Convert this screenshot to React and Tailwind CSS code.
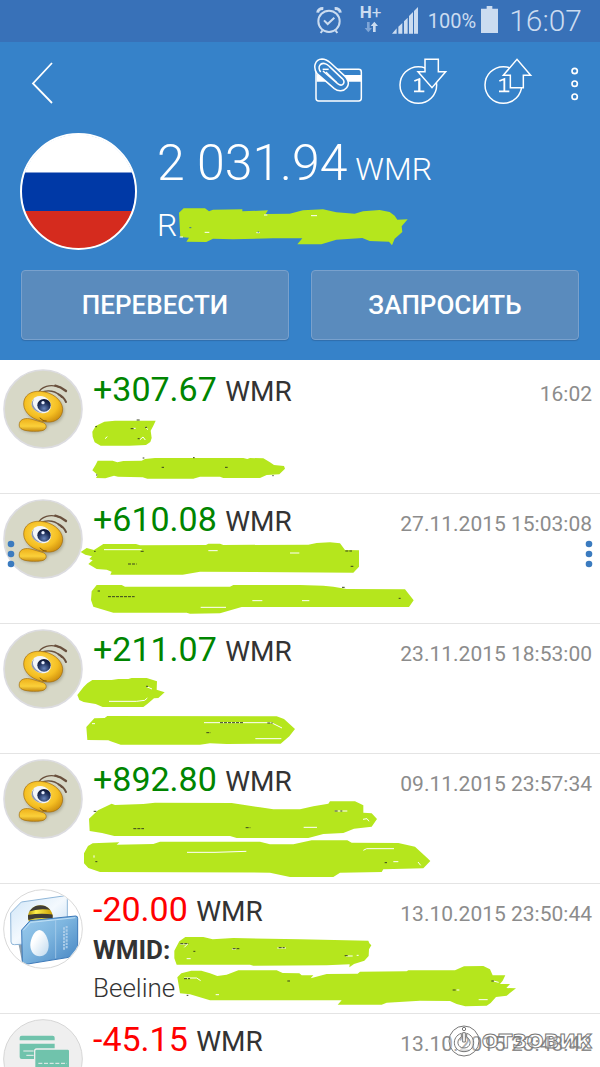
import React from "react";

const LIME = "#b5e61d";

function StatusBar() {
  return (
    <div className="flex h-[42px] items-center justify-end bg-[#3871b8] pr-[18px] text-[#cbdcf0]">
      <svg className="h-[42px] w-[26px]" viewBox="51 0 78 126" fill="none" stroke="currentColor" aria-label="Будильник">
        <circle cx="90" cy="64" r="32" strokeWidth="6" />
        <path d="M75 61l11 11 20-19" strokeWidth="6" />
        <path d="M56 38c1-8 8-13 17-12M124 38c-1-8-8-13-17-12" strokeWidth="9" />
        <path d="M70 92l-5 7M110 92l5 7" strokeWidth="6" />
      </svg>
      <div className="ml-[18px] flex h-[42px] w-[22px] flex-col items-start pt-[3px]">
        <span className="text-[17px] font-bold leading-[18px]">H<span className="font-normal">+</span></span>
        <svg className="ml-1 h-[12px] w-[16px]" viewBox="0 0 48 36" aria-hidden="true">
          <path d="M9 3h8v18h7L13 34 2 21h7z" fill="#7ea5d6" />
          <path d="M27 33h8V15h7L31 2 20 15h7z" fill="currentColor" />
        </svg>
      </div>
      <svg className="ml-[9px] h-[42px] w-[28px]" viewBox="274 0 84 126" fill="currentColor" aria-label="Сигнал">
        <path d="M277 101l14-16v16zM296 80l12-11v32h-12zM313 64l11-11v48h-11zM328 48l12-12v65h-12zM343 33l12-12v80h-12z" />
      </svg>
      <span className="ml-[9px] text-[20px] leading-[42px]">100%</span>
      <svg className="ml-[4px] h-[42px] w-[19px]" viewBox="540 0 57 126" fill="currentColor" aria-label="Батарея">
        <path d="M560 18h17v8h17v73h-51V26h17z" />
      </svg>
      <span className="ml-[10px] text-[30px] font-light leading-[42px]">16:07</span>
    </div>
  );
}

function Toolbar() {
  return (
    <div className="flex h-[84px] items-center justify-between pl-[24px] pr-[17px]">
      <button aria-label="Назад" className="h-[56px] w-[36px]">
        <svg viewBox="0 0 36 56" fill="none" stroke="white" strokeWidth="1.8">
          <path d="M28 7L9 27.500l19 19.500" />
        </svg>
      </button>
      <div className="flex gap-[34px]">
        <button aria-label="Прикрепить карту" className="h-[56px] w-[52px]">
          <svg viewBox="39 168 156 168" fill="none" stroke="white" strokeWidth="4.500" strokeLinejoin="round">
            <rect x="48" y="208" width="136" height="95" rx="8" />
            <path d="M50 225h134v20H50z" fill="white" stroke="none" />
            <path d="M51 221C38 201 45 178 66 177c11 0 18 5 26 12l41 38c12 12 16 25 7 36-9 11-25 12-37 3z" fill="#3682c9" />
            <path d="M62 216C51 200 61 187 76 191c5 1 8 4 12 8l38 36c13 13 1 27-13 16L69 213" />
            <path d="M68 208h18" />
            <path d="M78 216l32 31" strokeWidth="3.500" />
          </svg>
        </button>
        <button aria-label="Получить" className="h-[56px] w-[50px]">
          <svg viewBox="297 168 150 168" fill="none" stroke="white" strokeWidth="4.500">
            <circle cx="355" cy="255" r="55" />
            <path d="M343 243l15-6v36M342 274h31" strokeWidth="5.500" />
            <path d="M375 178h40v37h22l-41 48-42-48h21z" fill="#3682c9" />
            <path d="M358 237v36" strokeWidth="5.500" />
          </svg>
        </button>
        <button aria-label="Отправить" className="h-[56px] w-[50px]">
          <svg viewBox="549 168 150 168" fill="none" stroke="white" strokeWidth="4.500">
            <circle cx="610" cy="255" r="55" />
            <path d="M598 243l15-6v36M597 274h31" strokeWidth="5.500" />
            <path d="M631 263v-37h-21l41-48 41 48h-22v37z" fill="#3682c9" />
          </svg>
        </button>
        <button aria-label="Меню" className="h-[56px] w-[16px]">
          <svg viewBox="801 168 48 168" fill="none" stroke="white" strokeWidth="5">
            <circle cx="824" cy="213" r="8" />
            <circle cx="824" cy="251" r="8" />
            <circle cx="824" cy="290" r="8" />
          </svg>
        </button>
      </div>
    </div>
  );
}

function Balance() {
  return (
    <div className="flex pl-[20px] pt-[7px] text-white">
      <svg className="h-[117px] w-[117px] shrink-0" viewBox="0 0 117 117" aria-label="Россия">
        <defs>
          <clipPath id="flag"><circle cx="58.500" cy="58.500" r="57" /></clipPath>
        </defs>
        <g clipPath="url(#flag)">
          <rect width="117" height="40" fill="#fff" />
          <rect y="39.500" width="117" height="39" fill="#0039a6" />
          <rect y="78" width="117" height="39" fill="#d52b1e" />
        </g>
        <circle cx="58.500" cy="58.500" r="57.500" fill="none" stroke="#fff" strokeWidth="2" />
      </svg>
      <div className="relative ml-[20px] font-light">
        <div className="text-[50px] leading-[60px]">
          2 031.94<span className="text-[32px] leading-none"> WMR</span>
        </div>
        <div className="pt-[12px] text-[32px] leading-[40px]">R</div>
        <svg className="absolute left-[21px] top-[74px] h-[39px] w-[232px]" viewBox="85 230 696 117" aria-hidden="true">
          <path d="M88 247L102 234 166 234 178 243 190 238 278 237 278 243 355 240 348 251 420 250 460 240 520 237 560 246 615 250 640 243 690 239 720 245 735 256 743 268 774 267 756 288 758 305 735 325 727 345 718 334 660 332 638 323 560 328 515 342 443 342 458 324 370 324 250 327 190 325 170 335 110 334 118 322 92 320z" fill={LIME} />
          <path d="M90 320h10M343 254h10M484 256h18M320 307h10M165 306h14" stroke="#fff" strokeWidth="3" />
          <path d="M119 292h6M324 305h4" stroke="#3b70a5" strokeWidth="3" />
        </svg>
      </div>
    </div>
  );
}

function Actions() {
  const cls =
    "h-[70px] flex-1 rounded-[4px] border border-[#79a1cd] bg-[#5a8bbd] text-[26px] font-medium text-white shadow-[0_1px_1px_rgba(40,80,130,0.4)]";
  return (
    <div className="flex gap-[22px] px-[21px] pb-[20px] pt-[20px]">
      <button className={cls}>ПЕРЕВЕСТИ</button>
      <button className={cls}>ЗАПРОСИТЬ</button>
    </div>
  );
}

function BeeAvatar() {
  return (
    <svg className="h-[80px] w-[80px]" viewBox="9 12 240 240" aria-hidden="true">
      <defs>
        <radialGradient id="beeBody" cx="0.45" cy="0.4" r="0.65">
          <stop offset="0" stopColor="#ffe05c" />
          <stop offset="0.65" stopColor="#f5bf22" />
          <stop offset="1" stopColor="#cf900f" />
        </radialGradient>
        <linearGradient id="beeTail" x1="0" y1="0" x2="0" y2="1">
          <stop offset="0" stopColor="#eeb01a" />
          <stop offset="0.6" stopColor="#fad03a" />
          <stop offset="1" stopColor="#c88b10" />
        </linearGradient>
        <radialGradient id="beeEye" cx="0.5" cy="0.75" r="0.7">
          <stop offset="0" stopColor="#6884ba" />
          <stop offset="0.6" stopColor="#22345f" />
          <stop offset="1" stopColor="#101936" />
        </radialGradient>
        <filter id="beeShadow" x="-20%" y="-20%" width="150%" height="150%">
          <feGaussianBlur stdDeviation="4" />
        </filter>
      </defs>
      <circle cx="129" cy="132" r="117" fill="#d7d8c7" stroke="#dcdce0" strokeWidth="5" />
      <g fill="#8d8c74" opacity="0.6" filter="url(#beeShadow)">
        <ellipse cx="134" cy="132" rx="59" ry="46" transform="rotate(18 134 132)" />
        <ellipse cx="101" cy="185" rx="42" ry="18" />
      </g>
      <g fill="none" stroke="#69503d" strokeLinecap="round">
        <path d="M113 88C122 64 151 55 183 68" strokeWidth="4" />
        <path d="M166 62q16 3 32 16" strokeWidth="7" />
        <path d="M121 83C143 73 169 77 185 97" strokeWidth="4" />
        <path d="M176 88q15 7 22 23" strokeWidth="6" />
      </g>
      <path d="M58 176c2-14 20-19 38-13l34 10c13 6 11 21-4 24-19 4-52 2-63-6-5-4-6-9-5-15z" fill="url(#beeTail)" stroke="#a06d10" strokeWidth="2" />
      <path d="M71 117c0-26 22-40 50-38 36 2 65 26 67 52 1 26-22 43-48 40-38-3-69-26-69-54z" fill="url(#beeBody)" stroke="#9e6a11" strokeWidth="2" />
      <ellipse cx="124" cy="119" rx="30" ry="25" fill="#f4f6f9" transform="rotate(25 124 119)" />
      <path d="M103 101c-13 17 6 37 24 43-26-2-43-26-24-43z" fill="#8e98b4" />
      <ellipse cx="132" cy="121" rx="20" ry="19" fill="url(#beeEye)" />
      <ellipse cx="129" cy="113" rx="5" ry="5" fill="#e8efff" />
      <path d="M120 158c5 8 13 10 20 10" fill="none" stroke="#77500c" strokeWidth="3" />
    </svg>
  );
}

function SimAvatar() {
  return (
    <svg className="h-[80px] w-[80px]" viewBox="9 27 240 240" aria-hidden="true">
      <defs>
        <clipPath id="simClip"><circle cx="129" cy="147" r="116" /></clipPath>
        <linearGradient id="simBack" x1="0" y1="0" x2="1" y2="1">
          <stop offset="0" stopColor="#cfe5f7" />
          <stop offset="0.5" stopColor="#f3f9fe" />
          <stop offset="1" stopColor="#b8d5ee" />
        </linearGradient>
        <linearGradient id="simFront" x1="0" y1="0" x2="1" y2="1">
          <stop offset="0" stopColor="#9cccee" />
          <stop offset="0.45" stopColor="#7db5df" />
          <stop offset="1" stopColor="#4483c1" />
        </linearGradient>
        <linearGradient id="simBee" x1="0" y1="0" x2="1" y2="0">
          <stop offset="0" stopColor="#a98900" />
          <stop offset="0.35" stopColor="#fff04c" />
          <stop offset="1" stopColor="#c79b00" />
        </linearGradient>
        <linearGradient id="simEgg" x1="0" y1="0" x2="1" y2="1">
          <stop offset="0.3" stopColor="#fff" />
          <stop offset="1" stopColor="#bed9ee" />
        </linearGradient>
        <clipPath id="simBeeClip"><ellipse cx="121" cy="111" rx="37" ry="35" /></clipPath>
      </defs>
      <circle cx="129" cy="147" r="118" fill="#fff" stroke="#d9d9d9" strokeWidth="3" />
      <g clipPath="url(#simClip)">
        <path d="M55 190l12 60 14 8-10-68z" fill="#90a0ad" />
        <path d="M32 99l32-33 133-19q5 0 5 6v125q0 7-7 8l-152 8q-9 1-10-8z" fill="url(#simBack)" stroke="#8fb6d8" strokeWidth="3" />
        <g clipPath="url(#simBeeClip)">
          <rect x="80" y="72" width="80" height="80" fill="url(#simBee)" />
          <path d="M80 72h80v20q-40-10-80 5zM80 106q40-8 80-2v14q-40-9-80 3z" fill="#3e3c36" />
        </g>
        <path d="M65 150l25-28 137-14q6 0 6 7v101q0 11-8 13L77 253q-9 1-10-9z" fill="url(#simFront)" stroke="#3d79b9" strokeWidth="3" />
        <path d="M70 151l22-24 134-14" fill="none" stroke="#c3e1f5" strokeWidth="3" />
        <path d="M167 121v114" stroke="#b4d5ef" strokeWidth="2" />
        <path d="M118 150c15 0 28 27 28 46 0 21-11 33-27 33s-28-14-28-34c0-19 13-45 27-45z" fill="url(#simEgg)" />
        <path d="M192 142v68M200 138v68" stroke="#a9cbe8" strokeWidth="6" strokeDasharray="7 3" />
      </g>
    </svg>
  );
}

function CardsAvatar() {
  return (
    <svg className="h-[80px] w-[80px]" viewBox="9 417 240 240" aria-hidden="true">
      <circle cx="129" cy="537" r="118" fill="#efefef" stroke="#d6d6d6" strokeWidth="3" />
      <path d="M59 481v-8q0-6 6-6h93q6 0 6 6v8zM59 491h105v46H65q-6 0-6-6z" fill="#70c3ac" />
      <path d="M70 513h31M79 526h22" stroke="#efefef" strokeWidth="3" />
      <rect x="104" y="507" width="105" height="72" rx="6" fill="#70c3ac" stroke="#efefef" strokeWidth="4" />
      <path d="M115 550h86" stroke="#efefef" strokeWidth="3" strokeDasharray="12 5" />
    </svg>
  );
}

const rows = [
  {
    amount: "+307.67",
    date: "16:02",
    shapes: [
      "M277 215l10-17 26-13 32-3h122l-7 15-8 15 3 22-4 12-13 9-50 2H302l-18-10-6-17z",
      "M277 331L287 314 293 302 338 302 352 307 370 303 425 302 435 297 465 294 730 294 742 297 750 294 790 295 810 307 822 315 852 318 855 326 838 343 800 345 780 354 670 354 660 350 600 350 580 356 442 356 428 352 354 350 342 347 316 355 288 354 293 345z",
    ],
    white: "M399 205h8M436 201l8 8M420 239l9-8 7 9M315 236l7-6",
    dark: "M286 200h5M410 180h9M392 206h9M435 202h6M413 236h6M428 294h5M579 293h5M485 322h7M675 322h8M817 347h4M288 345h4",
  },
  {
    amount: "+610.08",
    date: "27.11.2015 15:03:08",
    dots: true,
    shapes: [
      "M242 186L260 174 282 180 310 162 408 162 420 166 618 165 625 161 660 161 670 165 925 164 950 159 990 157 1020 160 1035 180 1077 181 1077 230 1060 248 600 245 548 254 331 254 335 245 320 239 290 237 265 222 278 211 268 207 276 199 256 194z",
      "M275 304L290 285 365 285 375 290 690 290 700 285 900 285 970 287 1000 290 1040 297 1215 298 1241 331 1227 351 725 351 660 370 570 371 560 368 340 368 300 356 280 350 273 330z",
    ],
    white: "M602 352h76M757 332h30M1170 189h4M312 179h113M625 182h28M870 189h28M906 332h22",
    dark: "M422 184h10M384 222h26M293 303h7M324 320h80M1036 183h20M1052 229h8M1026 292h8M1196 325h6M282 184h5",
  },
  {
    amount: "+211.07",
    date: "23.11.2015 18:53:00",
    shapes: [
      "M232 225L250 202 262 190 277 180 335 180 355 177 385 177 395 174 440 174 471 184 470 209 494 217 475 234 462 235 442 252 430 261 308 261 287 252 251 246 238 240z",
      "M259 321L283 295 314 294 322 288 830 289 852 297 885 327 868 349 842 371 680 372 630 370 600 374 362 374 332 364 325 361 262 360z",
    ],
    white: "M327 244h82l25-3 8-7M438 199l18 8M612 308h202l32 16M276 311h9M766 356h78",
    dark: "M438 199h6M660 308h70M802 309h16M619 338h13",
  },
  {
    amount: "+892.80",
    date: "09.11.2015 23:57:34",
    shapes: [
      "M267 206L294 181 335 161 345 165 430 162 465 158 695 159 780 172 820 178 900 178 940 169 985 161 990 154 1065 154 1090 166 1090 188 1115 190 1131 207 1115 230 1062 236 1030 249 970 252 925 264 710 264 690 258 343 258 306 249 269 243z",
      "M252 310L264 288 278 280 358 277 350 284 460 282 480 275 780 275 810 283 880 283 935 271 1042 271 1055 278 1195 279 1245 290 1281 323 1291 333 1270 355 1150 358 1145 366 1020 368 1000 381 870 381 810 368 300 366 265 354 252 340z",
    ],
    white: "M561 307h84l94-3M1004 183h38M1089 208l12-2 6 8M1090 301l10-5h82M911 232h40M1180 335h15M1254 336l8 10M282 316v7",
    dark: "M281 184h8M400 236h32M1004 183h12M737 233h14M1154 338h7M286 335h6M1021 183h6",
  },
  {
    amount: "-20.00",
    date: "13.10.2015 23:50:44",
    label: "WMID:",
    note: "Beeline",
    negative: true,
    avatar: "sim",
    shapes: [
      "M523 212L538 184 556 171 610 171 638 178 700 174 900 178 1105 182 1108 190 1114 196 1107 208 1106 228 1093 242 1062 252 1048 262 1049 253 980 256 760 257 750 254 530 254 523 235z",
      "M532 292L544 280 574 272 604 272 630 280 652 288 680 284 715 271 830 271 848 279 898 280 905 286 940 286 932 295 980 282 1073 281 1080 275 1220 274 1225 271 1365 271 1392 259 1450 258 1470 268 1478 286 1516 286 1508 302 1500 312 1530 312 1519 324 1548 325 1520 347 1488 351 1472 369 1460 377 1396 379 1370 372 1350 363 1260 362 1160 368 1145 374 1013 374 1025 361 630 361 570 343 540 340 536 315z",
    ],
    white: "M541 192h22l-10 10M552 294h38l12 8M560 236h12M696 207h12M832 204h26M647 344h10M1038 228h20M1070 226h6M1370 330h8M1436 359h27M1480 303l16 4",
    dark: "M541 191h25M552 296h18M580 214h6M698 206h20M836 203h18M862 303h8M1034 227h9M1358 330h10M1474 303h8M560 346h5",
  },
  { amount: "-45.15", date: "13.10.2015 23:48:42", negative: true, avatar: "cards" },
];

function EdgeDots({ side }) {
  return (
    <svg
      className={side === "left" ? "absolute left-[7px] top-[46px] h-[28px] w-[8px]" : "absolute right-[7px] top-[46px] h-[28px] w-[8px]"}
      viewBox="0 0 8 28"
      fill="#3b7bbf"
      aria-hidden="true"
    >
      <circle cx="4" cy="4" r="3.300" />
      <circle cx="4" cy="14" r="3.300" />
      <circle cx="4" cy="24" r="3.300" />
    </svg>
  );
}

function Row({ row }) {
  return (
    <li className="relative flex min-h-[130px] border-b border-[#e4e4e4] pl-[3px] pr-[8px]">
      <div className="shrink-0 pt-[5px]">
        {row.avatar === "sim" ? <SimAvatar /> : row.avatar === "cards" ? <CardsAvatar /> : <BeeAvatar />}
      </div>
      <div className="ml-[10px] min-w-0 flex-1 pt-[3px] text-[#333]">
        <div className="flex items-baseline justify-between">
          <span className="text-[34px] leading-[44px]">
            <span className={row.negative ? "text-[#ff0000]" : "text-[#008500]"}>{row.amount}</span>{" "}
            <span className="text-[28px] leading-none">WMR</span>
          </span>
          <time className="text-[21px] leading-none text-[#8c8c8c]">{row.date}</time>
        </div>
        {row.label && <div className="text-[26px] font-bold leading-[38px]">{row.label}</div>}
        {row.note && <div className="text-[26px] font-light leading-[38px]">{row.note}</div>}
      </div>
      {row.shapes && (
        <svg className="pointer-events-none absolute left-0 top-0 h-[130px] w-[600px]" viewBox="0 12 1800 390" fill="none" aria-hidden="true">
          {row.shapes.map((d) => <path key={d} d={d} fill={LIME} />)}
          <path d={row.white} stroke="#fff" strokeWidth="3" />
          <path d={row.dark} stroke="#3a4420" strokeWidth="3" strokeDasharray="9 3" />
        </svg>
      )}
      {row.dots && <EdgeDots side="left" />}
      {row.dots && <EdgeDots side="right" />}
    </li>
  );
}

function Watermark() {
  return (
    <div className="pointer-events-none absolute bottom-[10px] right-[8px] flex items-center gap-[2px]">
      <svg className="h-[32px] w-[32px]" viewBox="0 0 96 96" fill="none" stroke="#777" strokeWidth="3" aria-hidden="true">
        <circle cx="48" cy="48" r="45" fill="#fff" fillOpacity="0.3" />
        <circle cx="48" cy="12" r="5" />
        <path d="M40 25c-31 10-27 55 8 55s39-45 8-55v11c17 10 12 33-8 33s-25-23-8-33z" fill="#fff" fillOpacity="0.5" />
        <path d="M44 23h8v28h-8z" fill="#fff" />
      </svg>
      <span className="font-['DejaVu_Sans',sans-serif] text-[20px] font-bold leading-[32px] text-white/30 [-webkit-text-stroke:1px_#777]">ОТЗОВИК</span>
    </div>
  );
}

export default function App() {
  return (
    <div className="relative flex h-screen flex-col overflow-hidden bg-white font-['Roboto','Liberation_Sans',sans-serif]">
      <header className="shrink-0 bg-[#3682c9]">
        <StatusBar />
        <Toolbar />
        <Balance />
        <Actions />
      </header>
      <ul className="min-h-0 flex-1 overflow-y-auto pt-1 [scrollbar-width:none]">
        {rows.map((row) => <Row key={row.amount} row={row} />)}
      </ul>
      <Watermark />
    </div>
  );
}
